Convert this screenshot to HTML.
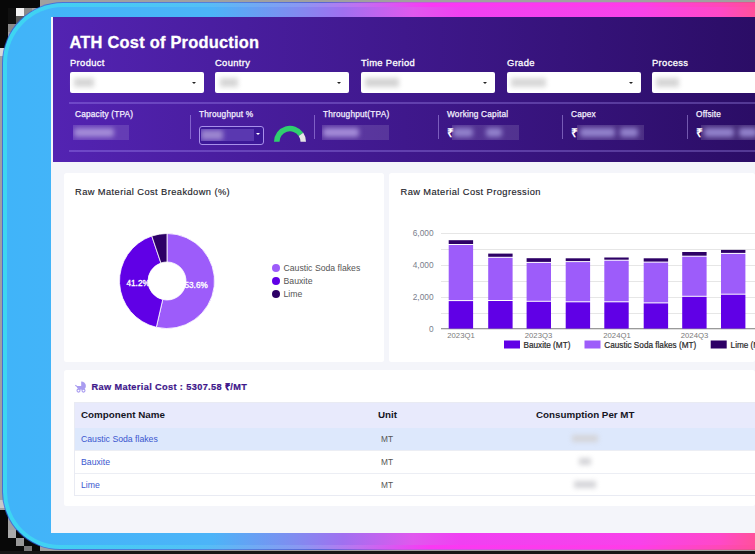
<!DOCTYPE html>
<html><head><meta charset="utf-8">
<style>
*{margin:0;padding:0;box-sizing:border-box}
html,body{width:755px;height:554px;overflow:hidden;background:#a0a0a0;font-family:"Liberation Sans",sans-serif}
.abs{position:absolute}
#glow0{position:absolute;left:2px;top:2px;width:832px;height:548px;border-radius:61px 49px 49px 58px;opacity:.75;background:linear-gradient(90deg,#2a5ee6 0px,#3a78ee 220px,#4050e8 320px,#d040f0 400px,#f040f0 600px,#ff3a80 760px)}
#glow{position:absolute;left:3px;top:3px;width:830px;height:546px;border-radius:60px 48px 48px 57px;
background:linear-gradient(90deg,#3cd6f2 0px,#52c0f6 197px,#8a98f2 297px,#c070f0 357px,#fa38f4 427px,#ff3ce8 637px,#ff48b8 717px,#ff5090 767px)}
#glow2{position:absolute;left:7px;top:7px;width:830px;height:538px;border-radius:56px 44px 44px 53px;
background:linear-gradient(90deg,#40b4f9 0px,#4cb4f8 205px,#7f8df0 286px,#a070f0 336px,#e058ee 406px,#f040f2 453px,#f842ea 633px,#ff48c8 713px,#ff5298 750px)}
#bgtl{position:absolute;left:0;top:0;width:40px;height:8px;background:#080808}
#bgtl2{position:absolute;left:0;top:0;width:8px;height:48px;background:#080808}
.blk{position:absolute;width:8px;height:8px}
#bgbl{position:absolute;left:0;top:510px;width:8px;height:44px;background:#080808}
#bgbl2{position:absolute;left:0;top:530px;width:40px;height:24px;background:#080808}
#bgb{position:absolute;left:0;top:551px;width:755px;height:3px;background:#151515}
#page{position:absolute;left:51px;top:17px;width:704px;height:516px;background:#f4f5fa}
#hdr{position:absolute;left:53px;top:17px;width:702px;height:145px;background:linear-gradient(90deg,#5323b2,#2b0d66)}
.t{position:absolute;white-space:nowrap;line-height:1}
.lbl{color:#fff;font-size:9.4px;letter-spacing:0.35px;-webkit-text-stroke:0.3px #fff}
.sel{position:absolute;top:72px;width:134px;height:21px;background:#fff;border-radius:2px}
.sel .ar{position:absolute;right:8.5px;top:9.5px;width:0;height:0;border-left:2.2px solid transparent;border-right:2.2px solid transparent;border-top:2.6px solid #222}
.blur{position:absolute;filter:blur(2.5px)}
.bz{position:absolute;overflow:hidden;top:125px;height:15px;background:rgba(255,255,255,0.13)}
.bz i{position:absolute;display:block;top:3px;height:9px;background:#a48cd8;filter:blur(2.6px);border-radius:3px}
.ml{color:#f4f0ff;font-size:8.3px;letter-spacing:0.19px;-webkit-text-stroke:0.25px #f4f0ff}
.vd{position:absolute;top:115px;width:1px;height:24px;background:rgba(200,180,255,.45)}
.card{position:absolute;background:#fff;border-radius:2.5px}
.ct{position:absolute;font-size:9.3px;letter-spacing:0.42px;color:#1e1e2a;-webkit-text-stroke:0.15px #1e1e2a;white-space:nowrap;line-height:1}
</style></head><body>
<div id="bgtl"></div><div id="bgtl2"></div><div class="blk" style="left:16px;top:8px;background:#f4f4f4"></div><div class="blk" style="left:24px;top:8px;background:#8a8a8a"></div><div class="blk" style="left:8px;top:8px;background:#101010"></div><div class="blk" style="left:8px;top:16px;background:#101010"></div><div class="blk" style="left:16px;top:16px;background:#5a5a5a"></div><div class="blk" style="left:8px;top:24px;background:#8a8a8a"></div><div class="blk" style="left:0;top:48px;background:#d8d8d8"></div><div id="bgbl"></div><div id="bgbl2"></div><div class="blk" style="left:8px;top:530px;background:#aaa"></div><div class="blk" style="left:16px;top:538px;background:#999"></div><div class="blk" style="left:24px;top:546px;background:#777"></div><div class="blk" style="left:0;top:500px;background:#c8c8c8"></div><div id="bgb"></div><div id="glow0"></div><div id="glow"></div><div id="glow2"></div>
<div id="page"></div>
<div id="hdr"></div>

<!-- title -->
<div class="t" style="left:69.5px;top:34.4px;font-size:16.4px;letter-spacing:0.24px;font-weight:bold;color:#fff;-webkit-text-stroke:0.3px #fff">ATH Cost of Production</div>

<!-- filter labels -->
<div class="t lbl" style="left:70px;top:58.2px">Product</div>
<div class="t lbl" style="left:215px;top:58.2px">Country</div>
<div class="t lbl" style="left:361px;top:58.2px">Time Period</div>
<div class="t lbl" style="left:507px;top:58.2px">Grade</div>
<div class="t lbl" style="left:652px;top:58.2px">Process</div>

<div class="sel" style="left:70px"><div class="blur" style="left:4px;top:6px;width:20px;height:9px;background:#d6d6d6"></div><div class="ar"></div></div>
<div class="sel" style="left:215px"><div class="blur" style="left:5px;top:6px;width:18px;height:9px;background:#d6d6d6"></div><div class="ar"></div></div>
<div class="sel" style="left:361px"><div class="blur" style="left:4px;top:6px;width:34px;height:9px;background:#d4d4d4"></div><div class="ar"></div></div>
<div class="sel" style="left:507px"><div class="blur" style="left:4px;top:6px;width:35px;height:9px;background:#d8d8d8"></div><div class="ar"></div></div>
<div class="sel" style="left:652px;width:120px"><div class="blur" style="left:4px;top:6px;width:23px;height:9px;background:#d6d6d6"></div></div>

<!-- metric row lines -->
<div class="abs" style="left:69px;top:102px;width:686px;height:2px;background:rgba(180,160,255,.30)"></div>
<div class="abs" style="left:69px;top:150px;width:686px;height:2px;background:rgba(180,160,255,.30)"></div>
<div class="vd" style="left:190px"></div>
<div class="vd" style="left:314px"></div>
<div class="vd" style="left:438px"></div>
<div class="vd" style="left:562px"></div>
<div class="vd" style="left:687px"></div>

<div class="t ml" style="left:75px;top:110px">Capacity (TPA)</div>
<div class="bz" style="left:73px;width:56px"><i style="left:1px;width:40px"></i></div>

<div class="t ml" style="left:199px;top:110px">Throughput %</div>
<div class="abs" style="left:199px;top:126px;width:65px;height:18.5px;border:1.6px solid #a890ea;border-radius:3px;background:#3c1898"></div>
<div class="abs" style="left:201px;top:128.5px;width:52.5px;height:12px;background:#5a38b0;overflow:hidden"><i style="position:absolute;display:block;left:0;top:1px;width:22px;height:10px;background:#9c86d0;filter:blur(2.5px)"></i></div>
<div class="abs" style="left:255.5px;top:133px;width:0;height:0;border-left:2.3px solid transparent;border-right:2.3px solid transparent;border-top:2.6px solid #fff"></div>
<svg class="abs" style="left:270px;top:122px" width="40" height="24" viewBox="0 0 40 24">
<path d="M6.75 19.8 A13.25 13.25 0 0 1 30.98 12.39" fill="none" stroke="#2fcf6f" stroke-width="5.5"/>
<path d="M30.98 12.39 A13.25 13.25 0 0 1 33.25 19.8" fill="none" stroke="#e6e6e6" stroke-width="5.5"/>
</svg>

<div class="t ml" style="left:323px;top:110px">Throughput(TPA)</div>
<div class="bz" style="left:322px;width:67px"><i style="left:1px;width:36px"></i></div>

<div class="t ml" style="left:447px;top:110px">Working Capital</div>
<div class="t" style="left:447px;top:127px;font-size:12px;color:#fff;font-weight:bold">₹</div>
<div class="bz" style="left:452px;width:67px"><i style="left:1px;width:20px;background:#9282cc"></i><i style="left:34px;width:16px;background:#9282cc"></i></div>

<div class="t ml" style="left:571px;top:110px">Capex</div>
<div class="t" style="left:571px;top:127px;font-size:12px;color:#fff;font-weight:bold">₹</div>
<div class="bz" style="left:576.5px;width:67.5px"><i style="left:3px;width:35px;background:#9282cc"></i><i style="left:43px;width:18px;background:#9282cc"></i></div>

<div class="t ml" style="left:696px;top:110px">Offsite</div>
<div class="t" style="left:696px;top:127px;font-size:12px;color:#fff;font-weight:bold">₹</div>
<div class="bz" style="left:701px;width:60px"><i style="left:3px;width:30px;background:#9282cc"></i><i style="left:38px;width:18px;background:#9282cc"></i></div>

<!-- cards -->
<div class="card" style="left:64px;top:173px;width:320px;height:189px"></div>
<div class="card" style="left:389px;top:173px;width:366px;height:189px"></div>
<div class="card" style="left:64px;top:370px;width:691px;height:136px"></div>

<div class="ct" style="left:75px;top:187.6px">Raw Material Cost Breakdown (%)</div>
<div class="ct" style="left:400.5px;top:187.6px">Raw Material Cost Progression</div>

<!-- donut -->
<svg class="abs" style="left:119px;top:233px" width="96" height="96" viewBox="0 0 96 96" id="donut"><path d="M48,0.5 A47.5 47.5 0 1 1 37.31482491866642,94.28257807729867 L43.72592996746657,66.51303123091947 A19 19 0 1 0 48,29 Z" fill="#9d5cfa" stroke="#fff" stroke-width="0.8"></path><path d="M37.31482491866642,94.28257807729867 A47.5 47.5 0 0 1 32.77088294718037,3.0075118070636364 L41.90835317887215,30.003004722825455 A19 19 0 0 0 43.72592996746657,66.51303123091947 Z" fill="#6000e6" stroke="#fff" stroke-width="0.8"></path><path d="M32.77088294718037,3.0075118070636364 A47.5 47.5 0 0 1 47.99999999999999,0.5 L48,29 A19 19 0 0 0 41.90835317887215,30.003004722825455 Z" fill="#2d0066" stroke="#fff" stroke-width="0.8"></path><text x="7.5" y="53" font-size="8.2" fill="#fff" stroke="#fff" stroke-width="0.35" font-family="Liberation Sans">41.2%</text><text x="65.5" y="55" font-size="8.2" fill="#fff" stroke="#fff" stroke-width="0.35" font-family="Liberation Sans">53.6%</text></svg>

<!-- legend -->
<div class="abs" style="left:272px;top:264px;width:8px;height:8px;border-radius:50%;background:#9d5cfa"></div>
<div class="abs" style="left:272px;top:277px;width:8px;height:8px;border-radius:50%;background:#6000e6"></div>
<div class="abs" style="left:272px;top:290px;width:8px;height:8px;border-radius:50%;background:#2d0066"></div>
<div class="t" style="left:283.5px;top:263.5px;font-size:8.7px;color:#555">Caustic Soda flakes</div>
<div class="t" style="left:283.5px;top:276.5px;font-size:8.7px;color:#555">Bauxite</div>
<div class="t" style="left:283.5px;top:289.5px;font-size:8.7px;color:#555">Lime</div>

<!-- bar chart -->
<svg class="abs" style="left:389px;top:173px" width="366" height="189" id="bars"><rect x="52" y="60" width="314" height="1" fill="#e6e6e6"></rect><rect x="52" y="76" width="314" height="1" fill="#e6e6e6"></rect><rect x="52" y="92" width="314" height="1" fill="#e6e6e6"></rect><rect x="52" y="108" width="314" height="1" fill="#e6e6e6"></rect><rect x="52" y="124" width="314" height="1" fill="#e6e6e6"></rect><rect x="52" y="140" width="314" height="1" fill="#e6e6e6"></rect><rect x="52" y="155" width="314" height="1.3" fill="#9a9a9a"></rect><text x="44.5" y="63" text-anchor="end" font-size="8.3" fill="#7a7e8c" font-family="Liberation Sans">6,000</text><text x="44.5" y="95" text-anchor="end" font-size="8.3" fill="#7a7e8c" font-family="Liberation Sans">4,000</text><text x="44.5" y="127" text-anchor="end" font-size="8.3" fill="#7a7e8c" font-family="Liberation Sans">2,000</text><text x="44.5" y="159" text-anchor="end" font-size="8.3" fill="#7a7e8c" font-family="Liberation Sans">0</text><rect x="59.69999999999999" y="128.10000000000002" width="24.4" height="27.5" fill="#6000e6"></rect><rect x="59.69999999999999" y="72" width="24.4" height="55.10000000000002" fill="#9d5cfa"></rect><rect x="59.69999999999999" y="67.19999999999999" width="24.4" height="3.8000000000000114" fill="#2d0066"></rect><rect x="99.19999999999999" y="128" width="24.4" height="27.600000000000023" fill="#6000e6"></rect><rect x="99.19999999999999" y="84.80000000000001" width="24.4" height="42.19999999999999" fill="#9d5cfa"></rect><rect x="99.19999999999999" y="80.6" width="24.4" height="3.200000000000017" fill="#2d0066"></rect><rect x="137.60000000000002" y="128.8" width="24.4" height="26.80000000000001" fill="#6000e6"></rect><rect x="137.60000000000002" y="89.89999999999998" width="24.4" height="37.900000000000034" fill="#9d5cfa"></rect><rect x="137.60000000000002" y="85.19999999999999" width="24.4" height="3.6999999999999886" fill="#2d0066"></rect><rect x="176.70000000000005" y="129.3" width="24.4" height="26.30000000000001" fill="#6000e6"></rect><rect x="176.70000000000005" y="89.10000000000002" width="24.4" height="39.19999999999999" fill="#9d5cfa"></rect><rect x="176.70000000000005" y="85.30000000000001" width="24.4" height="2.8000000000000114" fill="#2d0066"></rect><rect x="215.29999999999995" y="129.3" width="24.4" height="26.30000000000001" fill="#6000e6"></rect><rect x="215.29999999999995" y="87.69999999999999" width="24.4" height="40.60000000000002" fill="#9d5cfa"></rect><rect x="215.29999999999995" y="84.5" width="24.4" height="2.1999999999999886" fill="#2d0066"></rect><rect x="254.70000000000005" y="130.39999999999998" width="24.4" height="25.200000000000045" fill="#6000e6"></rect><rect x="254.70000000000005" y="89.60000000000002" width="24.4" height="39.799999999999955" fill="#9d5cfa"></rect><rect x="254.70000000000005" y="85.30000000000001" width="24.4" height="3.3000000000000114" fill="#2d0066"></rect><rect x="293.20000000000005" y="123.80000000000001" width="24.4" height="31.80000000000001" fill="#6000e6"></rect><rect x="293.20000000000005" y="83.69999999999999" width="24.4" height="39.10000000000002" fill="#9d5cfa"></rect><rect x="293.20000000000005" y="79" width="24.4" height="3.6999999999999886" fill="#2d0066"></rect><rect x="332" y="121.69999999999999" width="24.4" height="33.900000000000034" fill="#6000e6"></rect><rect x="332" y="80.9" width="24.4" height="39.79999999999998" fill="#9d5cfa"></rect><rect x="332" y="76.9" width="24.4" height="3" fill="#2d0066"></rect><text x="72" y="164.5" text-anchor="middle" font-size="7.7" fill="#7a7a7a" font-family="Liberation Sans">2023Q1</text><text x="149.5" y="164.5" text-anchor="middle" font-size="7.7" fill="#7a7a7a" font-family="Liberation Sans">2023Q3</text><text x="228" y="164.5" text-anchor="middle" font-size="7.7" fill="#7a7a7a" font-family="Liberation Sans">2024Q1</text><text x="305.5" y="164.5" text-anchor="middle" font-size="7.7" fill="#7a7a7a" font-family="Liberation Sans">2024Q3</text><rect x="115" y="167.5" width="16" height="8" fill="#6000e6"></rect><text x="134.5" y="174.5" font-size="8.2" fill="#2a2a2a" stroke="#2a2a2a" stroke-width="0.2" font-family="Liberation Sans">Bauxite (MT)</text><rect x="195.5" y="167.5" width="16" height="8" fill="#9d5cfa"></rect><text x="215.29999999999995" y="174.5" font-size="8.2" fill="#2a2a2a" stroke="#2a2a2a" stroke-width="0.2" font-family="Liberation Sans">Caustic Soda flakes (MT)</text><rect x="321.70000000000005" y="167.5" width="16" height="8" fill="#2d0066"></rect><text x="341.6" y="174.5" font-size="8.2" fill="#2a2a2a" stroke="#2a2a2a" stroke-width="0.2" font-family="Liberation Sans">Lime (MT)</text></svg>

<!-- table card -->
<svg class="abs" style="left:74px;top:380px" width="14" height="14" viewBox="0 0 14 14">
<path d="M7.2 1.4 A4.7 4.7 0 0 1 11.9 6.1 L7.2 6.1 Z" fill="#a99cf0"/>
<path d="M2.7 6.1 L11.9 6.1 Q11.9 9.8 7.3 9.8 Q2.7 9.8 2.7 6.1 Z" fill="#a99cf0"/>
<path d="M1.3 5.2 L3.3 6.6" stroke="#a99cf0" stroke-width="1.1" fill="none"/>
<circle cx="4.5" cy="10.6" r="1.5" fill="none" stroke="#a99cf0" stroke-width="1.1"/>
<circle cx="9.5" cy="10.6" r="1.5" fill="none" stroke="#a99cf0" stroke-width="1.1"/>
</svg>
<div class="t" style="left:91.5px;top:382.5px;font-size:9.2px;letter-spacing:0.37px;font-weight:bold;color:#3d168a;-webkit-text-stroke:0.2px #3d168a">Raw Material Cost : 5307.58 ₹/MT</div>

<div class="abs" style="left:74px;top:402px;width:681px;height:94px;border:1px solid #e9ebf3;border-right:none"></div>
<div class="abs" style="left:75px;top:403px;width:680px;height:25px;background:#e8eafc"></div>
<div class="abs" style="left:75px;top:428px;width:680px;height:22px;background:#dde8fc"></div>
<div class="abs" style="left:75px;top:473px;width:680px;height:1px;background:#eceef4"></div>
<div class="abs" style="left:75px;top:450px;width:680px;height:1px;background:#eceef4"></div>

<div class="t" style="left:81px;top:410px;font-size:9.8px;font-weight:bold;color:#15151f">Component Name</div>
<div class="t" style="left:378px;top:410px;font-size:9.8px;font-weight:bold;color:#15151f">Unit</div>
<div class="t" style="left:536px;top:410px;font-size:9.8px;font-weight:bold;color:#15151f">Consumption Per MT</div>

<div class="t" style="left:81px;top:435px;font-size:8.7px;color:#3b57cf">Caustic Soda flakes</div>
<div class="t" style="left:81px;top:458px;font-size:8.7px;color:#3b57cf">Bauxite</div>
<div class="t" style="left:81px;top:481px;font-size:8.7px;color:#3b57cf">Lime</div>
<div class="t" style="left:381px;top:435px;font-size:8.3px;color:#555">MT</div>
<div class="t" style="left:381px;top:458px;font-size:8.3px;color:#555">MT</div>
<div class="t" style="left:381px;top:481px;font-size:8.3px;color:#555">MT</div>
<div class="blur" style="left:572px;top:435px;width:26px;height:7px;background:#d4d4d8"></div>
<div class="blur" style="left:579px;top:458px;width:12px;height:7px;background:#d4d4d8"></div>
<div class="blur" style="left:574px;top:481px;width:22px;height:7px;background:#d4d4d8"></div>


</body></html>
